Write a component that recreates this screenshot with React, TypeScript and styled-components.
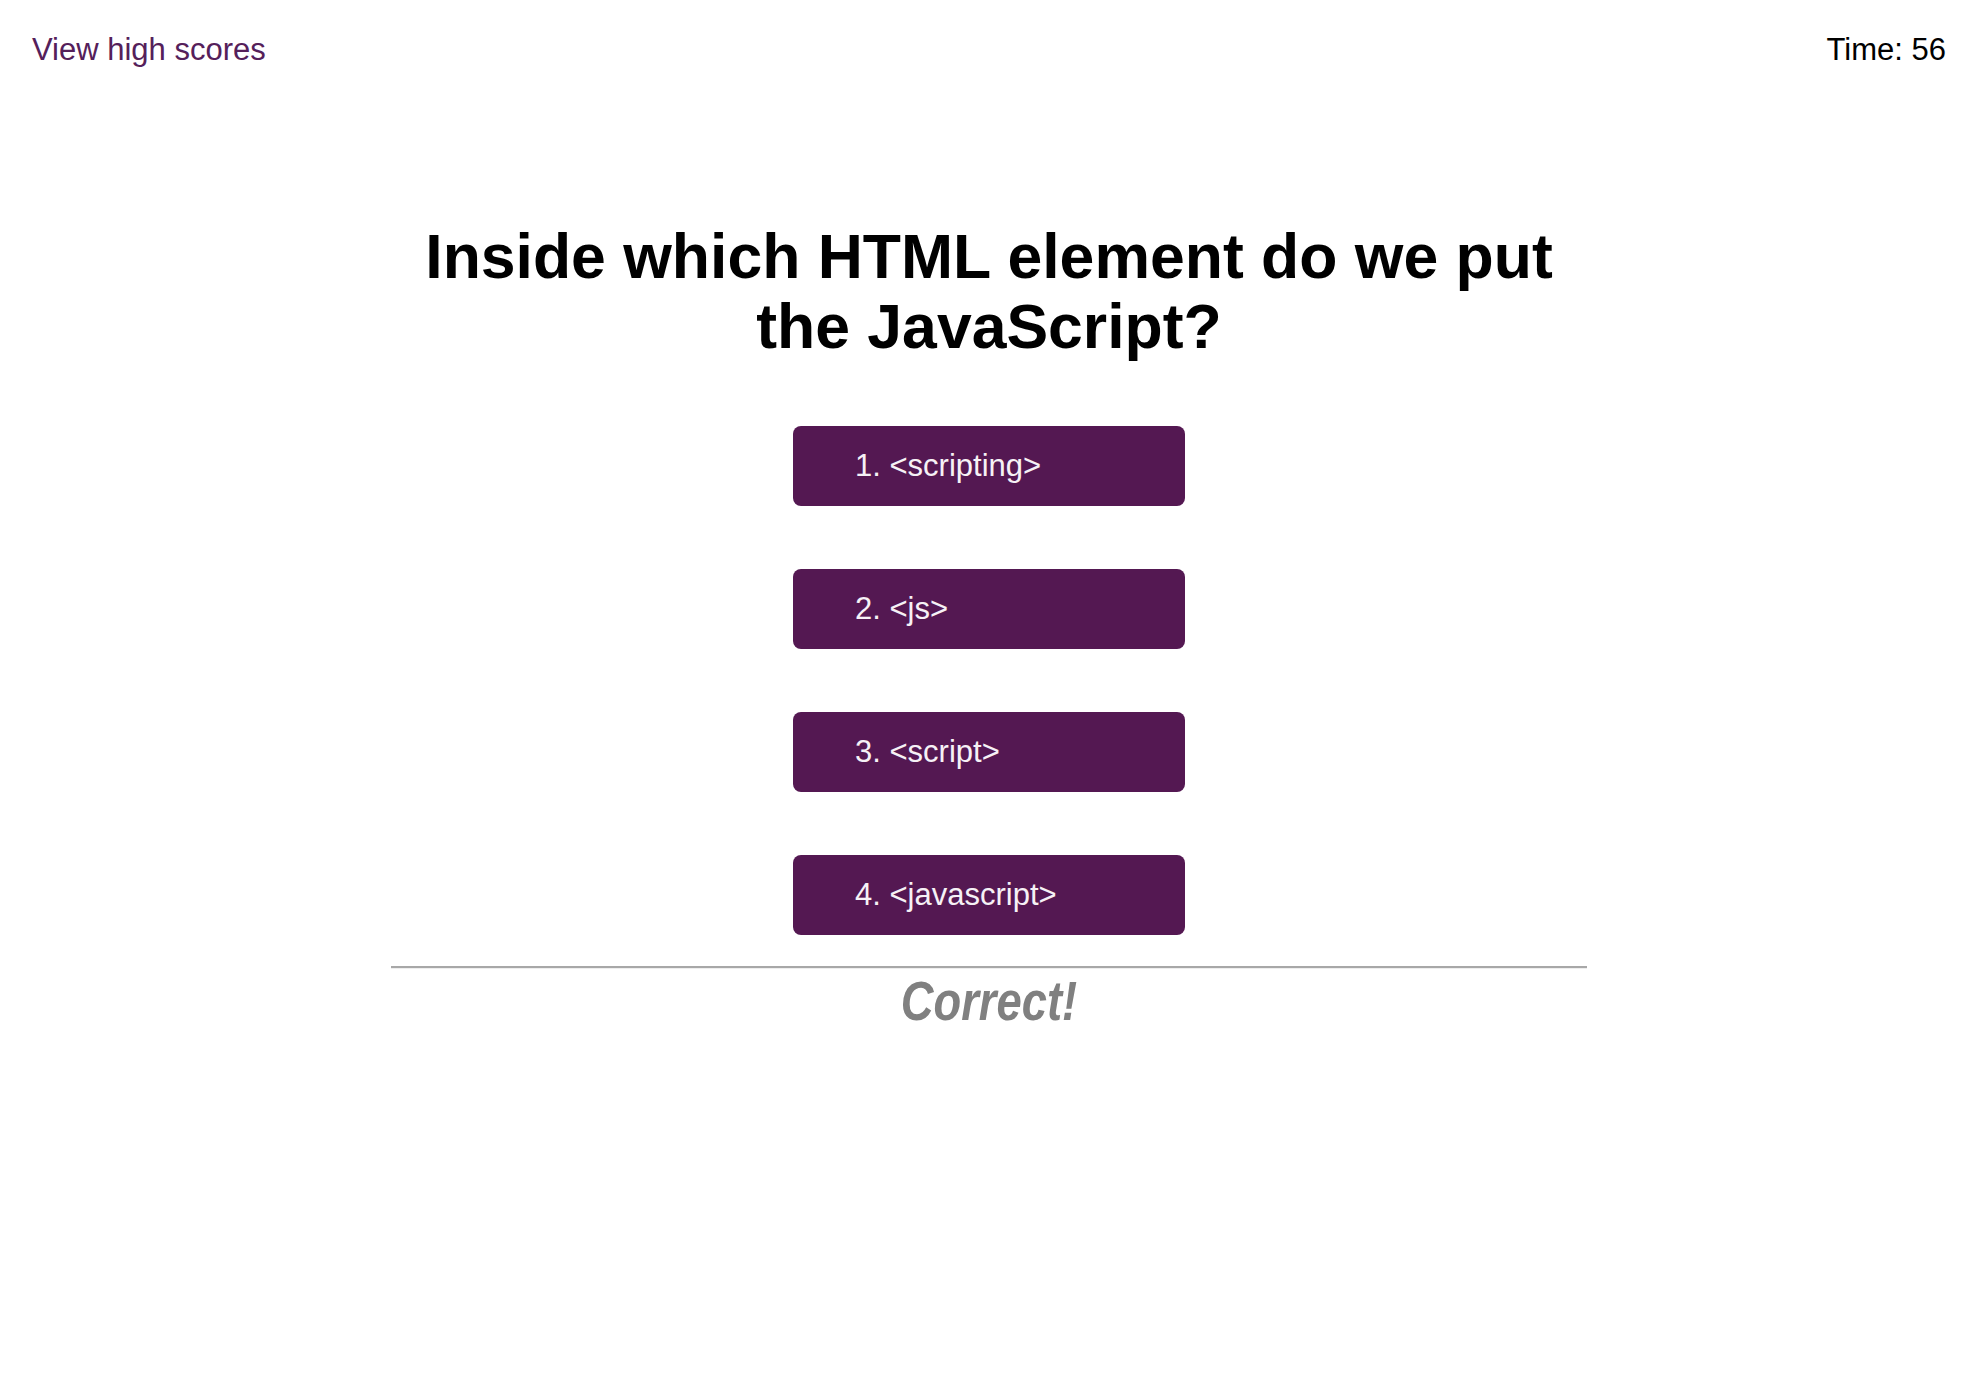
import React from "react";
import styled, { createGlobalStyle } from "styled-components";

const Global = createGlobalStyle`
  html, body { margin: 0; padding: 0; background: #ffffff; }
  body { font-family: "Liberation Sans", Arial, sans-serif; }
`;

const Page = styled.div`
  width: 100%;
  min-height: 1381px;
  display: flex;
  flex-direction: column;
  align-items: center;
`;

const Header = styled.header`
  align-self: stretch;
  display: flex;
  justify-content: space-between;
  align-items: baseline;
  padding: 32px 32px 0 32px;
  font-size: 31px;
  line-height: 36px;
`;

const ScoresLink = styled.a`
  color: #55205a;
  text-decoration: none;
  cursor: pointer;
`;

const Timer = styled.div`
  color: #000000;
`;

const Quiz = styled.main`
  width: 1196px;
  margin-top: 153px;
  display: flex;
  flex-direction: column;
  align-items: center;
`;

const Question = styled.h1`
  margin: 0;
  font-size: 62.5px;
  line-height: 70px;
  font-weight: 700;
  color: #000000;
  text-align: center;
`;

const Choices = styled.div`
  margin-top: 65px;
  display: flex;
  flex-direction: column;
  gap: 63px;
`;

const Choice = styled.button`
  width: 392px;
  height: 80px;
  border: none;
  border-radius: 8px;
  background: #541852;
  color: #f6f1f6;
  font-family: "Liberation Sans", Arial, sans-serif;
  font-size: 31px;
  text-align: left;
  padding: 0 0 0 62px;
  cursor: pointer;
`;

const Divider = styled.hr`
  align-self: stretch;
  margin: 31px 0 0 0;
  border: none;
  border-top: 2px solid #a8a8a8;
  border-bottom: 1px solid #eeeeee;
  height: 0;
`;

const Feedback = styled.div`
  margin-top: 0;
  display: inline-block;
  font-family: "Liberation Sans", Arial, sans-serif;
  font-size: 56px;
  line-height: 64px;
  font-weight: 700;
  font-style: italic;
  color: #808080;
  transform: scaleX(0.81);
`;

const choices = ["<scripting>", "<js>", "<script>", "<javascript>"];

export default function App() {
  return (
    <>
      <Global />
      <Page>
        <Header>
          <ScoresLink>View high scores</ScoresLink>
          <Timer>Time: 56</Timer>
        </Header>
        <Quiz>
          <Question>
            Inside which HTML element do we put
            <br />
            the JavaScript?
          </Question>
          <Choices>
            {choices.map((c, i) => (
              <Choice key={c}>{`${i + 1}. ${c}`}</Choice>
            ))}
          </Choices>
          <Divider />
          <Feedback>Correct!</Feedback>
        </Quiz>
      </Page>
    </>
  );
}
